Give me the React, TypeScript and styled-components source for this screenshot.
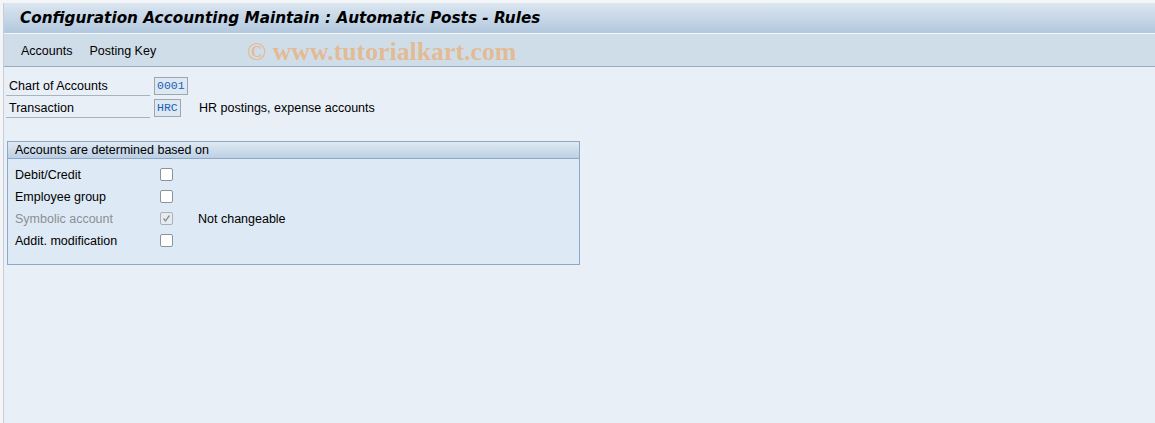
import React from "react";
import styled, { createGlobalStyle } from "styled-components";

const GlobalStyle = createGlobalStyle`
  html, body { margin: 0; padding: 0; }
  body {
    font-family: "Liberation Sans", Arial, sans-serif;
    font-size: 12.5px;
    color: #000;
    background: #f4f5f6;
  }
`;

const Page = styled.div`
  width: 1155px;
  height: 423px;
  box-sizing: border-box;
  padding: 3px 0 0 3px;
  display: flex;
  overflow: hidden;
`;

const Window = styled.div`
  flex: 1;
  display: flex;
  flex-direction: column;
  border-left: 1px solid #c6cdd6;
  background: #e8eff7;
`;

const TitleBar = styled.div`
  height: 30px;
  display: flex;
  align-items: center;
  padding-left: 16px;
  background: linear-gradient(#dbe6f0, #b2c8de);
  border-bottom: 1px solid #f4f7fa;
`;

const Title = styled.h1`
  margin: 0;
  font-family: "DejaVu Sans", Verdana, sans-serif;
  font-size: 15.25px;
  font-weight: bold;
  font-style: italic;
  color: #000;
`;

const Toolbar = styled.div`
  height: 33px;
  display: flex;
  align-items: center;
  gap: 17px;
  padding: 1px 0 0 17px;
  box-sizing: border-box;
  background: #cfdde8;
  border-bottom: 1px solid #9babbc;
  position: relative;
`;

const MenuItem = styled.span`
  font-size: 12.5px;
`;

const Watermark = styled.span`
  position: absolute;
  left: 243px;
  top: 3px;
  font-family: "Liberation Serif", "Times New Roman", serif;
  font-weight: bold;
  font-size: 25.8px;
  color: rgba(236, 172, 112, 0.7);
  white-space: nowrap;
`;

const Content = styled.div`
  flex: 1;
  padding: 10px 0 0 2px;
  display: flex;
  flex-direction: column;
`;

const FieldRow = styled.div`
  display: flex;
  align-items: center;
  height: 18px;
  margin-bottom: 4px;
`;

const FieldLabel = styled.div`
  width: 144px;
  height: 19px;
  line-height: 19px;
  padding-left: 3px;
  border-bottom: 1px solid #a9b3bd;
  box-sizing: border-box;
  margin-right: 4px;
`;

const InputBox = styled.div<{ $w: number }>`
  width: ${(p) => p.$w}px;
  height: 18px;
  box-sizing: border-box;
  border: 1px solid #9ba6b1;
  background: #dde8f2;
  color: #1a63b5;
  font-family: "Liberation Mono", "Courier New", monospace;
  font-size: 11.5px;
  line-height: 16px;
  padding-left: 2px;
`;

const Desc = styled.span`
  margin-left: 18px;
`;

const Group = styled.div`
  margin: 20px 0 0 1px;
  width: 573px;
  height: 124px;
  box-sizing: border-box;
  border: 1px solid #8fa8c5;
  background: #dde9f4;
  display: flex;
  flex-direction: column;
`;

const GroupHeader = styled.div`
  height: 16px;
  line-height: 16px;
  padding-left: 7px;
  background: linear-gradient(#dfe9f3, #bcd0e4);
  border-bottom: 1px solid #8fa8c5;
`;

const GroupBody = styled.div`
  padding: 9px 0 0 7px;
  display: flex;
  flex-direction: column;
  gap: 9px;
`;

const CheckRow = styled.div`
  display: flex;
  align-items: center;
  height: 13px;
`;

const CheckLabel = styled.span<{ $disabled?: boolean }>`
  width: 145px;
  color: ${(p) => (p.$disabled ? "#8a8f95" : "#000")};
`;

const Box = styled.span<{ $disabled?: boolean }>`
  width: 13px;
  height: 13px;
  box-sizing: border-box;
  border: 1px solid ${(p) => (p.$disabled ? "#aab0b6" : "#8c939b")};
  border-radius: 2px;
  background: ${(p) => (p.$disabled ? "#e6ebf0" : "#fff")};
  display: flex;
  align-items: center;
  justify-content: center;
`;

const Note = styled.span`
  margin-left: 25px;
`;

const rows = [
  { label: "Debit/Credit" },
  { label: "Employee group" },
  { label: "Symbolic account", disabled: true, checked: true, note: "Not changeable" },
  { label: "Addit. modification" },
];

const App: React.FC = () => {
  return (
    <>
      <GlobalStyle />
      <Page>
        <Window>
          <TitleBar>
            <Title>Configuration Accounting Maintain : Automatic Posts - Rules</Title>
          </TitleBar>
          <Toolbar>
            <MenuItem>Accounts</MenuItem>
            <MenuItem>Posting Key</MenuItem>
            <Watermark>© www.tutorialkart.com</Watermark>
          </Toolbar>
          <Content>
            <FieldRow>
              <FieldLabel>Chart of Accounts</FieldLabel>
              <InputBox $w={34}>0001</InputBox>
            </FieldRow>
            <FieldRow>
              <FieldLabel>Transaction</FieldLabel>
              <InputBox $w={27}>HRC</InputBox>
              <Desc>HR postings, expense accounts</Desc>
            </FieldRow>

            <Group>
              <GroupHeader>Accounts are determined based on</GroupHeader>
              <GroupBody>
                {rows.map((r) => (
                  <CheckRow key={r.label}>
                    <CheckLabel $disabled={r.disabled}>{r.label}</CheckLabel>
                    <Box $disabled={r.disabled}>
                      {r.checked && (
                        <svg width="9" height="9" viewBox="0 0 9 9">
                          <path d="M1.5 4.5 L3.5 7 L7.5 1.5" stroke="#8a9096" strokeWidth="1.3" fill="none" />
                        </svg>
                      )}
                    </Box>
                    {r.note && <Note>{r.note}</Note>}
                  </CheckRow>
                ))}
              </GroupBody>
            </Group>
          </Content>
        </Window>
      </Page>
    </>
  );
};

export default App;
